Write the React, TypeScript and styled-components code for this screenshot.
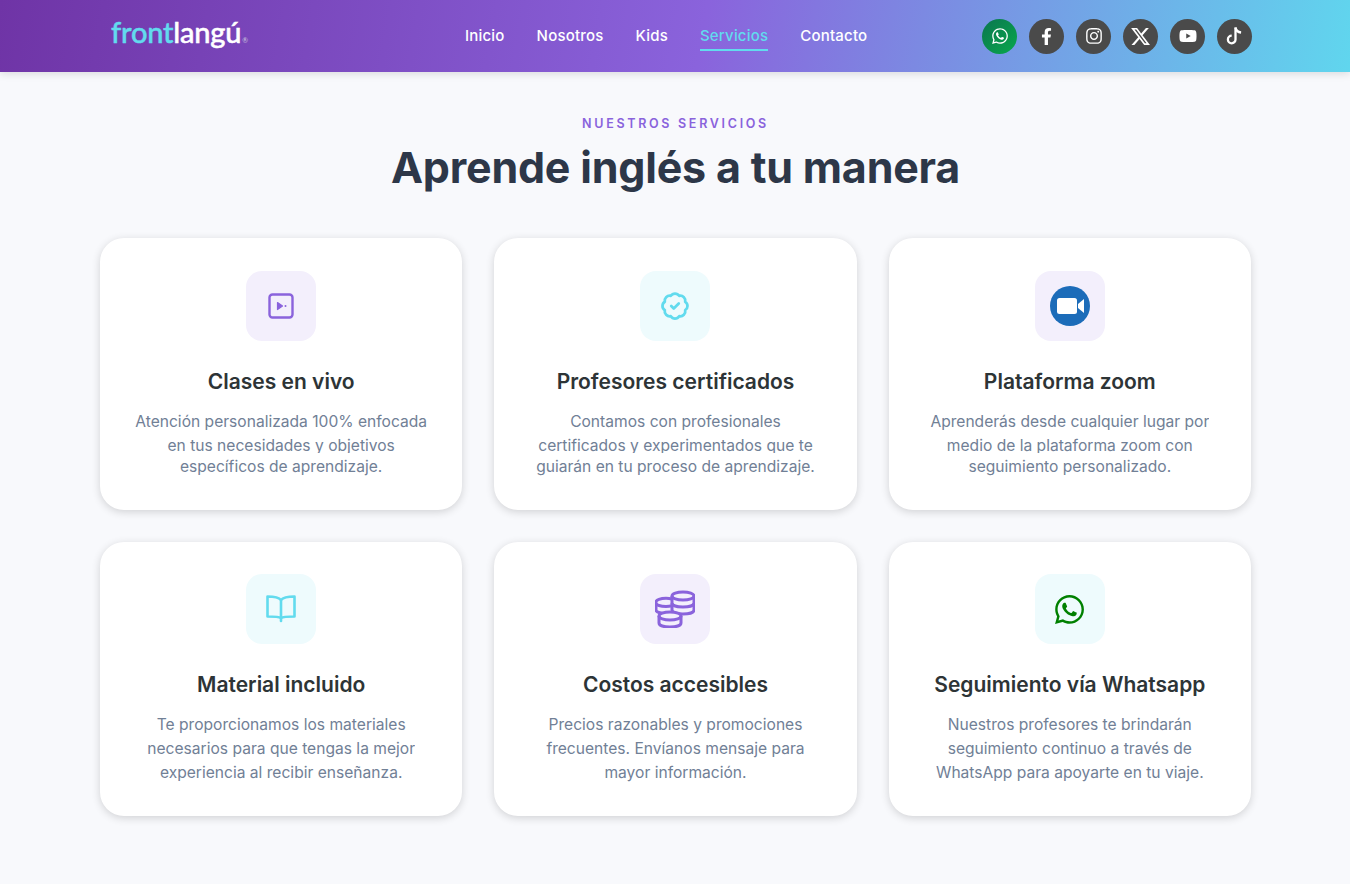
import { ReactNode } from "react";
import styled, { createGlobalStyle } from "styled-components";
import { BadgeCheck } from "lucide-react";
import { FaFacebookF, FaInstagram, FaWhatsapp, FaYoutube } from "react-icons/fa";
import { FaXTwitter } from "react-icons/fa6";

const GlobalStyle = createGlobalStyle`
  * {
    box-sizing: border-box;
  }
  body {
    margin: 0;
    background: #f8f9fc;
    font-family: Inter, "Liberation Sans", sans-serif;
  }
`;

// header
const Header = styled.header`
  height: 72px;
  display: flex;
  align-items: center;
  padding: 0 98px 0 111px;
  background: linear-gradient(100deg, #6f34a6 0%, #8a63dc 52%, #60d6ee 100%);
  box-shadow: 0 2px 8px rgba(0, 0, 0, 0.12);
`;
const Logo = styled.div`
  width: 135px;
  display: flex;
  align-items: baseline;
  margin-top: -9px;
  font-family: Lato, sans-serif;
  font-size: 29px;
  font-weight: 500;
  letter-spacing: -0.2px;
  -webkit-text-stroke: 0.5px currentColor;
  color: #fff;
`;
const LogoFront = styled.span`
  color: #62dbee;
`;
const LogoMark = styled.span`
  font-size: 7px;
  font-weight: 400;
  margin-left: 1px;
  -webkit-text-stroke: 0;
  color: #c9c4dd;
`;
const Nav = styled.nav`
  display: flex;
  gap: 32px;
  margin-left: 219px;
`;
const NavLink = styled.a<{ $active?: boolean }>`
  padding: 4px 0 3px;
  font-size: 15px;
  font-weight: 500;
  line-height: 20px;
  letter-spacing: 0.2px;
  color: ${(p) => (p.$active ? "#62dbee" : "#fff")};
  border-bottom: 2px solid ${(p) => (p.$active ? "#62dbee" : "transparent")};
`;
const Socials = styled.div`
  display: flex;
  gap: 12px;
  margin-left: auto;
`;
const SocialButton = styled.a<{ $green?: boolean }>`
  width: 35px;
  height: 35px;
  display: flex;
  align-items: center;
  justify-content: center;
  border-radius: 50%;
  color: #fff;
  background: ${(p) => (p.$green ? "linear-gradient(135deg, #0a7550, #09a84b)" : "#4a4a4a")};
`;

// section
const Section = styled.main`
  width: 1151px;
  margin-left: 100px;
  padding: 44px 0 67px;
`;
const Eyebrow = styled.div`
  text-align: center;
  font-size: 12.5px;
  font-weight: 600;
  line-height: 16px;
  letter-spacing: 2.7px;
  color: #8a63dc;
`;
const Heading = styled.h1`
  margin: 9px 0 45px;
  text-align: center;
  font-size: 43px;
  font-weight: 700;
  line-height: 52px;
  letter-spacing: -0.2px;
  color: #2d3748;
`;
const Grid = styled.div`
  display: grid;
  grid-template-columns: repeat(3, 1fr);
  gap: 32px;
`;
const Card = styled.article<{ $top?: boolean }>`
  display: flex;
  flex-direction: column;
  align-items: center;
  padding: ${(p) => (p.$top ? "33px 24px 31px" : "32.4px 24px 30.6px")};
  background: #fff;
  border-radius: 24px;
  box-shadow: 0 2px 8px rgba(0, 0, 0, 0.16);
`;
const IconBox = styled.div<{ $tone: "purple" | "cyan" }>`
  width: 70px;
  height: 70px;
  display: flex;
  align-items: center;
  justify-content: center;
  border-radius: 16px;
  background: ${(p) => (p.$tone === "purple" ? "#f3effc" : "#eefbfd")};
  color: ${(p) => (p.$tone === "purple" ? "#8a63dc" : "#62dbee")};
`;
const CardTitle = styled.h3`
  margin: 25px 0 12px;
  font-size: 21px;
  font-weight: 600;
  line-height: 32px;
  color: #2d3436;
`;
const CardText = styled.p`
  margin: 0;
  text-align: center;
  font-size: 15.6px;
  color: #718096;
`;
// the second line of the top row is cut just under the baseline
const Line = styled.span<{ $clipped?: boolean }>`
  display: block;
  line-height: 24px;
  white-space: nowrap;
  height: ${(p) => (p.$clipped ? "19px" : "24px")};
  margin-bottom: ${(p) => (p.$clipped ? "2px" : "0")};
  overflow: hidden;
`;

// icons
const TiktokIcon = () => (
  <svg width="20" height="20" viewBox="0 0 20 20" fill="none" stroke="currentColor" strokeWidth="2.3">
    <path d="M10.5 1.5 V13.5 a3.8 3.8 0 1 1 -3.8 -3.8" />
    <path d="M10.5 1.5 c0.4 2.8 2.4 4.7 5.6 5" />
  </svg>
);
const PlayIcon = () => (
  <svg width="26" height="26" viewBox="0 0 26 26" fill="none" stroke="currentColor" strokeWidth="2.4">
    <rect x="1.5" y="1.5" width="23" height="23" rx="3" />
    <path d="M9.5 9.5 L14.5 13 L9.5 16.5 Z" fill="currentColor" strokeWidth="1.2" strokeLinejoin="round" />
    <circle cx="17.5" cy="13" r="1" fill="currentColor" stroke="none" />
  </svg>
);
const ZoomIcon = () => (
  <svg width="40" height="40" viewBox="0 0 40 40">
    <circle cx="20" cy="20" r="20" fill="#1c6cb9" />
    <rect x="7" y="12" width="20" height="16" rx="2.5" fill="#fff" />
    <path d="M28 18 L34 13 V27 L28 22 Z" fill="#fff" />
  </svg>
);
const BookIcon = () => (
  <svg width="30" height="28" viewBox="0 0 30 28" fill="none" stroke="currentColor" strokeWidth="2.6" strokeLinejoin="round" strokeLinecap="round">
    <path d="M15 5 C13 2.5 10 1.5 1.5 1.5 V21.5 C9 21.5 13 21.5 15 23 C17 21.5 21 21.5 28.5 21.5 V1.5 C20 1.5 17 2.5 15 5 Z" />
    <path d="M15 5 V26" />
  </svg>
);
const CoinsIcon = () => (
  <svg width="40" height="38" viewBox="0 0 40 38" fill="none" stroke="currentColor" strokeWidth="3">
    <ellipse cx="28" cy="6" rx="11" ry="4" />
    <path d="M17 6 V20 C17 22.5 22 24 28 24 C34 24 39 22.5 39 20 V6" />
    <path d="M17 13 C17 15.5 22 17 28 17 C34 17 39 15.5 39 13" />
    <path d="M17 9 C15 8.5 13 8.3 11 8.3 C5.5 8.3 1 10 1 12 V20 C1 22 5.5 23.5 11 23.5" />
    <path d="M1 13 C1 15 5.5 16.5 11 16.5 C13 16.5 15 16.3 17 15.8" />
    <ellipse cx="15" cy="26" rx="11" ry="4" fill="#f3effc" />
    <path d="M4 26 V33 C4 35.5 9 37 15 37 C21 37 26 35.5 26 33 V26" />
  </svg>
);

type Tone = "purple" | "cyan";
type Service = { tone: Tone; icon: ReactNode; title: string; lines: string[]; clipped?: boolean };

const services: Service[] = [
  {
    tone: "purple",
    icon: <PlayIcon />,
    title: "Clases en vivo",
    lines: ["Atención personalizada 100% enfocada", "en tus necesidades y objetivos", "específicos de aprendizaje."],
    clipped: true,
  },
  {
    tone: "cyan",
    icon: <BadgeCheck size={30} strokeWidth={2.2} />,
    title: "Profesores certificados",
    lines: ["Contamos con profesionales", "certificados y experimentados que te", "guiarán en tu proceso de aprendizaje."],
    clipped: true,
  },
  {
    tone: "purple",
    icon: <ZoomIcon />,
    title: "Plataforma zoom",
    lines: ["Aprenderás desde cualquier lugar por", "medio de la plataforma zoom con", "seguimiento personalizado."],
    clipped: true,
  },
  {
    tone: "cyan",
    icon: <BookIcon />,
    title: "Material incluido",
    lines: ["Te proporcionamos los materiales", "necesarios para que tengas la mejor", "experiencia al recibir enseñanza."],
  },
  {
    tone: "purple",
    icon: <CoinsIcon />,
    title: "Costos accesibles",
    lines: ["Precios razonables y promociones", "frecuentes. Envíanos mensaje para", "mayor información."],
  },
  {
    tone: "cyan",
    icon: <FaWhatsapp size={33} color="#008000" />,
    title: "Seguimiento vía Whatsapp",
    lines: ["Nuestros profesores te brindarán", "seguimiento continuo a través de", "WhatsApp para apoyarte en tu viaje."],
  },
];

const links = ["Inicio", "Nosotros", "Kids", "Servicios", "Contacto"];

export default function App() {
  return (
    <>
      <GlobalStyle />
      <Header>
        <Logo>
          <LogoFront>front</LogoFront>langú<LogoMark>®</LogoMark>
        </Logo>
        <Nav>
          {links.map((link) => (
            <NavLink key={link} $active={link === "Servicios"}>
              {link}
            </NavLink>
          ))}
        </Nav>
        <Socials>
          <SocialButton $green>
            <FaWhatsapp size={18} />
          </SocialButton>
          <SocialButton>
            <FaFacebookF size={17} />
          </SocialButton>
          <SocialButton>
            <FaInstagram size={18} />
          </SocialButton>
          <SocialButton>
            <FaXTwitter size={21} />
          </SocialButton>
          <SocialButton>
            <FaYoutube size={18} />
          </SocialButton>
          <SocialButton>
            <TiktokIcon />
          </SocialButton>
        </Socials>
      </Header>
      <Section>
        <Eyebrow>NUESTROS SERVICIOS</Eyebrow>
        <Heading>Aprende inglés a tu manera</Heading>
        <Grid>
          {services.map((service) => (
            <Card key={service.title} $top={service.clipped}>
              <IconBox $tone={service.tone}>{service.icon}</IconBox>
              <CardTitle>{service.title}</CardTitle>
              <CardText>
                {service.lines.map((line, i) => (
                  <Line key={line} $clipped={service.clipped && i === 1}>
                    {line}
                  </Line>
                ))}
              </CardText>
            </Card>
          ))}
        </Grid>
      </Section>
    </>
  );
}
